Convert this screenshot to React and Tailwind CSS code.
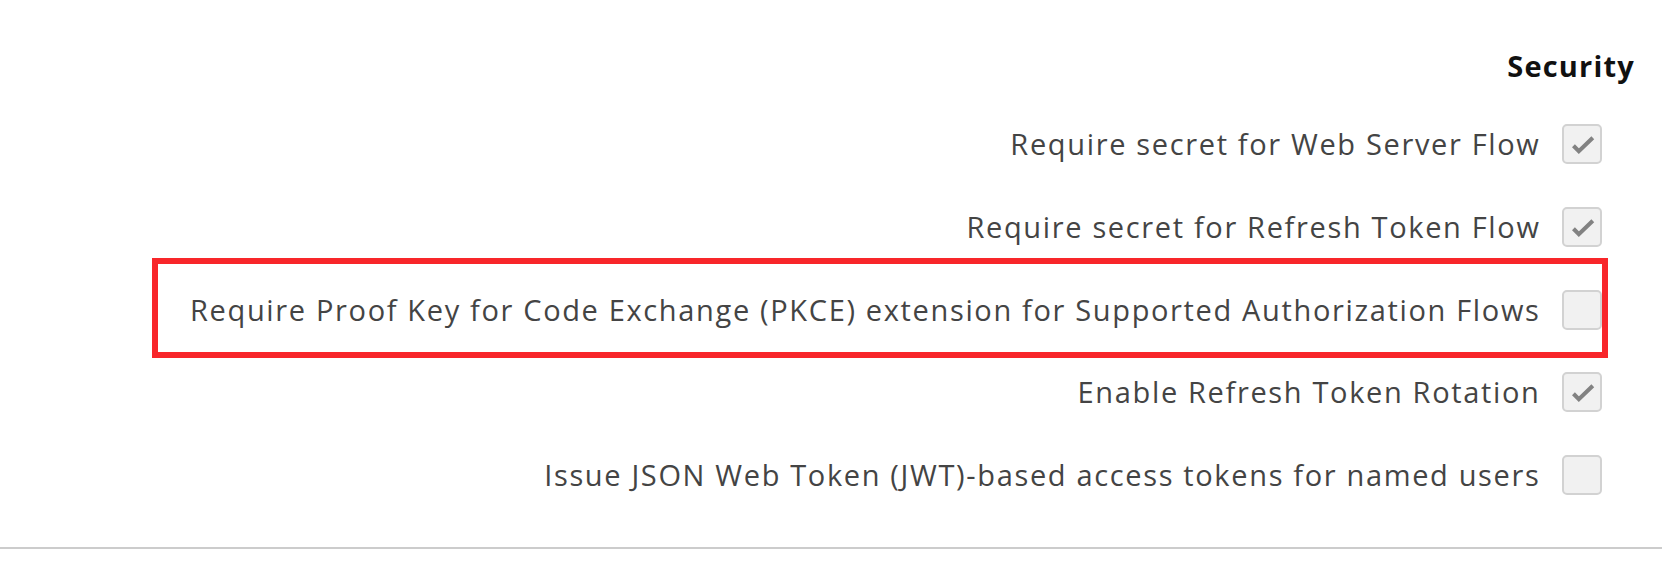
import React from "react";

function Check({ checked }) {
  return (
    <div className="w-[40px] h-[40px] shrink-0 rounded-[5px] border-2 border-[#d2d2d2] bg-[#f1f1f1] flex items-center justify-center">
      {checked && (
        <svg width="40" height="40" viewBox="0 0 40 40" className="block">
          <polyline
            points="10.5,22 16.5,28 32,13"
            fill="none"
            stroke="#828282"
            strokeWidth="4.5"
            strokeLinecap="butt"
            strokeLinejoin="miter"
          />
        </svg>
      )}
    </div>
  );
}

function Row({ label, checked, highlight }) {
  return (
    <div className="relative flex items-center gap-[21.5px] h-[40px]">
      {highlight && (
        <div className="absolute left-[-38px] right-[-6px] top-[-32px] bottom-[-28px] border-[6px] border-[#f8262a] pointer-events-none" />
      )}
      <span className="text-[29px] leading-[40px] tracking-[1.65px] text-[#444444] whitespace-nowrap">{label}</span>
      <Check checked={checked} />
    </div>
  );
}

export default function App() {
  return (
    <div
      className="w-[1662px] h-[574px] bg-white flex flex-col"
      style={{ fontFamily: '"Open Sans", "Noto Sans", sans-serif' }}
    >
      <div className="flex justify-end pr-[27px] pt-[46px]">
        <h2 className="text-[29px] leading-[40px] font-bold tracking-[1.2px] text-[#111111]">Security</h2>
      </div>
      <div className="flex flex-col items-end gap-[42.75px] pr-[60px] mt-[38px]">
        <Row label="Require secret for Web Server Flow" checked />
        <Row label="Require secret for Refresh Token Flow" checked />
        <Row label="Require Proof Key for Code Exchange (PKCE) extension for Supported Authorization Flows" highlight />
        <Row label="Enable Refresh Token Rotation" checked />
        <Row label="Issue JSON Web Token (JWT)-based access tokens for named users" />
      </div>
      <div className="mt-[52px] h-[2px] bg-[#cccccc] w-full" />
    </div>
  );
}
